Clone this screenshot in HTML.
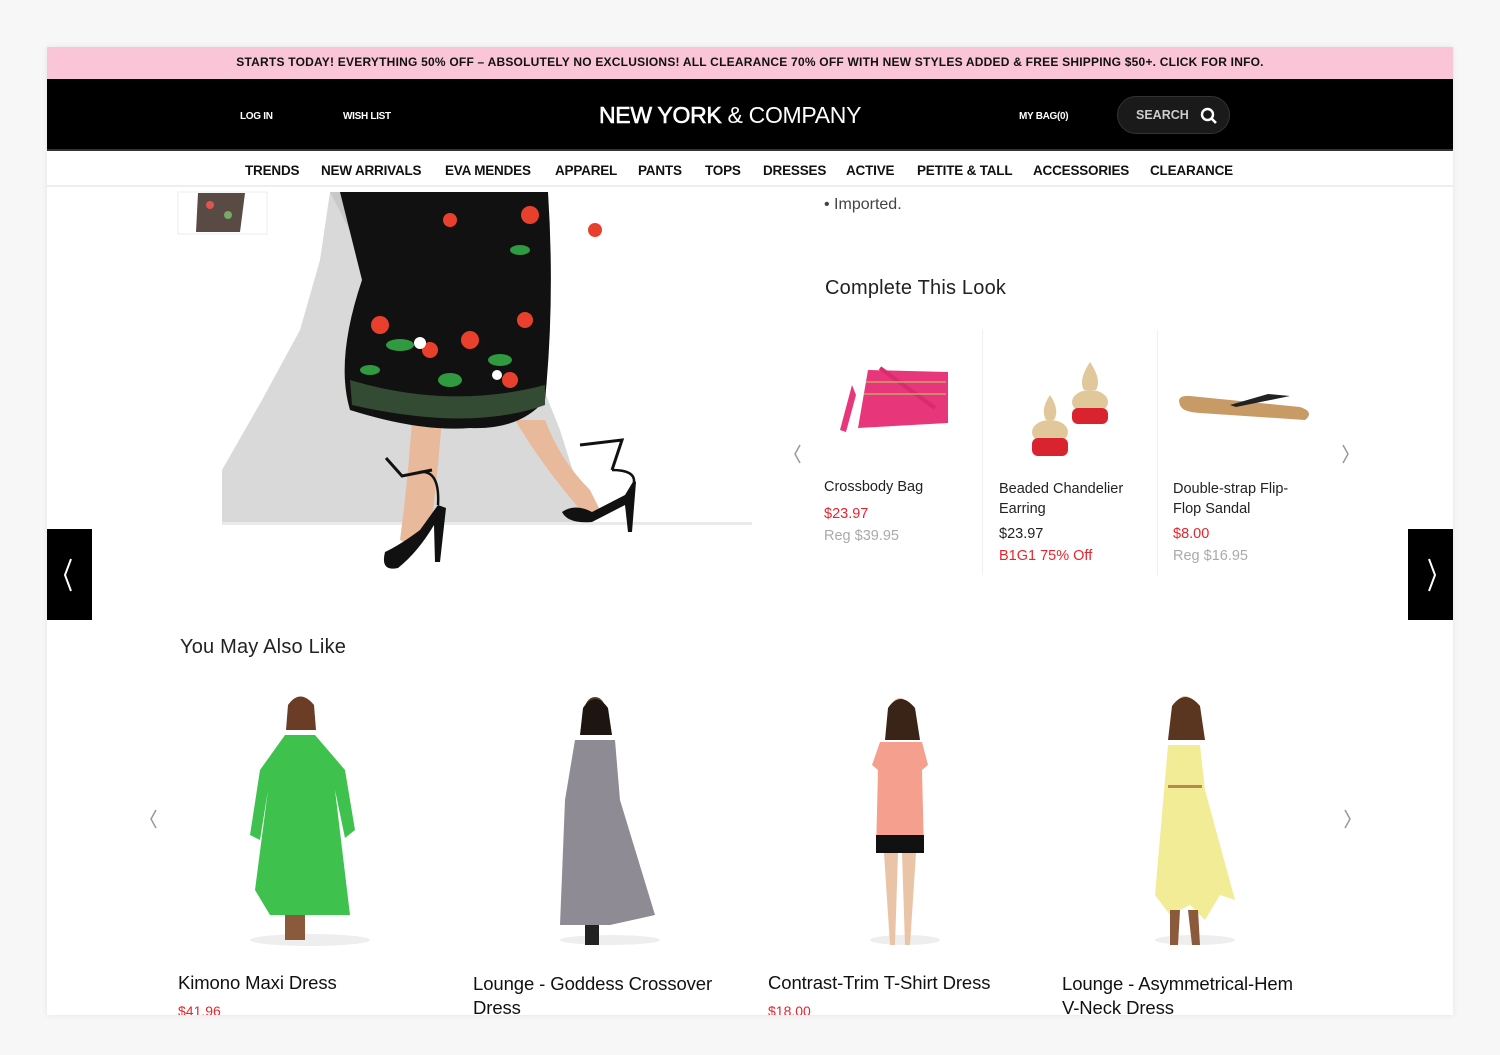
<!DOCTYPE html>
<html><head><meta charset="utf-8"><style>
*{margin:0;padding:0;box-sizing:border-box}
body{width:1500px;height:1055px;background:#f7f7f7;font-family:"Liberation Sans",Arial,sans-serif;position:relative;overflow:hidden}
.card{position:absolute;left:47px;top:47px;width:1406px;height:968px;background:#fff;overflow:hidden;box-shadow:0 0 6px rgba(0,0,0,.08)}
.a{position:absolute;white-space:nowrap}
.promo{left:0;top:0;width:1406px;height:32px;background:#fac6d7;font-size:12px;font-weight:bold;color:#111;text-align:center;line-height:31px;letter-spacing:.22px}
.hdr{left:0;top:32px;width:1406px;height:72px;background:#000;border-bottom:2px solid #333}
.nav{left:0;top:104px;width:1406px;height:36px;border-bottom:2px solid #eee;font-size:13.5px;font-weight:bold;color:#111}
.nav span{position:absolute;top:12px;letter-spacing:-.2px}
.sm{font-size:10px;font-weight:bold;color:#fff;letter-spacing:-.3px}
svg{position:absolute;left:0;top:0}
.t{font-size:14.5px;color:#222}
.r{color:#e8242d}
.g{color:#aaa}
.h{font-size:20px;color:#222;letter-spacing:.2px}
.p{font-size:18.5px;color:#111;letter-spacing:-.1px}
</style></head><body>
<div class="card">
<svg width="1406" height="968" viewBox="47 47 1406 968">
 <rect x="178" y="192" width="89" height="42" fill="#fff" stroke="#eee"/>
 <path d="M198 193 L245 193 L240 232 L196 232 Z" fill="#5a4a44"/>
 <circle cx="210" cy="205" r="4" fill="#d55"/><circle cx="228" cy="215" r="4" fill="#7a6"/>
 <path d="M222 525 L222 470 L262 400 L300 330 L320 260 L330 192 L500 192 L520 330 L560 430 L590 525 Z" fill="#d9d9d9"/>
 <path d="M330 192 L400 192 L395 250 L370 270 Z" fill="#c8c8c8"/>
 <rect x="222" y="522" width="530" height="3" fill="#eaeaea"/>
 <path d="M412 420 L442 420 Q438 470 432 520 L410 545 L400 540 Q408 480 412 420 Z" fill="#e8b99a"/>
 <path d="M515 420 L545 420 Q560 460 590 490 L600 510 L585 515 Q545 470 515 420 Z" fill="#e8b99a"/>
 <path d="M340 192 L548 192 Q555 300 545 400 Q520 430 470 428 Q420 432 350 410 Q335 360 362 280 Z" fill="#111"/>
 <path d="M350 380 Q450 410 545 385 L545 405 Q470 432 352 405 Z" fill="#334a33"/>
 <g fill="#e8402c"><circle cx="380" cy="325" r="9"/><circle cx="430" cy="350" r="8"/><circle cx="470" cy="340" r="9"/><circle cx="525" cy="320" r="8"/><circle cx="530" cy="215" r="9"/><circle cx="595" cy="230" r="7"/><circle cx="450" cy="220" r="7"/><circle cx="510" cy="380" r="8"/></g>
 <g fill="#2f9a3f"><ellipse cx="400" cy="345" rx="14" ry="6"/><ellipse cx="450" cy="380" rx="12" ry="7"/><ellipse cx="500" cy="360" rx="12" ry="6"/><ellipse cx="520" cy="250" rx="10" ry="5"/><ellipse cx="370" cy="370" rx="10" ry="5"/></g>
 <g fill="#fff"><circle cx="420" cy="343" r="6"/><circle cx="497" cy="375" r="5"/></g>
 <path d="M385 552 Q400 545 420 530 L438 505 L446 508 L440 562 L435 562 L434 525 Q418 552 398 568 Q380 572 385 552 Z" fill="#111"/>
 <path d="M386 458 L402 476 L432 470" stroke="#111" stroke-width="3" fill="none"/>
 <path d="M420 472 Q440 470 438 505" stroke="#111" stroke-width="2.5" fill="none"/>
 <path d="M562 512 Q575 503 592 512 L625 495 L634 480 L636 482 L632 532 L628 532 L625 505 L592 522 Q568 524 562 512 Z" fill="#111"/>
 <path d="M580 445 L622 440 L612 470" stroke="#111" stroke-width="3" fill="none"/>
 <path d="M612 470 Q635 470 634 482" stroke="#111" stroke-width="2.5" fill="none"/>
 <rect x="982" y="330" width="1" height="245" fill="#f0f0f0"/>
 <rect x="1157" y="330" width="1" height="245" fill="#f0f0f0"/>
 <path d="M868 370 L948 372 L948 423 L858 428 Z" fill="#e8367a"/>
 <path d="M852 385 L840 430 L846 432 L856 395 Z" fill="#e8367a"/>
 <path d="M880 368 L935 408" stroke="#d82c6e" stroke-width="4"/>
 <path d="M866 382 L946 382 M864 394 L946 394" stroke="#c9a06b" stroke-width="1.5"/>
 <g fill="#e0c89a"><path d="M1050 395 Q1040 410 1046 420 L1054 420 Q1060 410 1050 395Z"/><ellipse cx="1050" cy="432" rx="18" ry="12"/><path d="M1090 362 Q1078 380 1084 390 L1096 390 Q1102 380 1090 362Z"/><ellipse cx="1090" cy="402" rx="18" ry="12"/></g>
 <g fill="#d9232e"><rect x="1032" y="438" width="36" height="18" rx="6"/><rect x="1072" y="408" width="36" height="16" rx="6"/></g>
 <path d="M1180 405 Q1176 395 1190 396 L1300 407 Q1315 412 1305 420 L1200 413 Q1182 412 1180 405 Z" fill="#c79a66"/>
 <path d="M1230 405 L1268 394 L1290 396 L1236 407 Z" fill="#222"/>
 <path d="M800 445 L795 454 L800 463" stroke="#999" stroke-width="1.5" fill="none"/>
 <path d="M1343 445 L1348 454 L1343 463" stroke="#999" stroke-width="1.5" fill="none"/>
 <path d="M156 810 L151 819 L156 828" stroke="#999" stroke-width="1.5" fill="none"/>
 <path d="M1345 810 L1350 819 L1345 828" stroke="#999" stroke-width="1.5" fill="none"/>
 <rect x="47" y="529" width="45" height="91" fill="#000"/>
 <rect x="1408" y="529" width="45" height="91" fill="#000"/>
 <path d="M71 559 L65 575 L71 591" stroke="#fff" stroke-width="2" fill="none"/>
 <path d="M1429 559 L1435 575 L1429 591" stroke="#fff" stroke-width="2" fill="none"/>
 <g fill="#eee"><ellipse cx="310" cy="940" rx="60" ry="6"/><ellipse cx="610" cy="940" rx="50" ry="5"/><ellipse cx="905" cy="940" rx="35" ry="5"/><ellipse cx="1195" cy="940" rx="40" ry="5"/></g>
 <ellipse cx="300" cy="712" rx="11" ry="15" fill="#e5b593"/><path d="M288 705 Q300 688 314 705 L316 730 L286 730Z" fill="#6b3d26"/>
 <path d="M285 735 L315 735 L345 770 L355 830 L345 838 L335 790 L350 915 L270 915 L255 890 L268 790 L260 840 L250 835 L260 770 Z" fill="#3fc24d"/>
 <rect x="285" y="915" width="20" height="25" fill="#8b5a3c"/>
 <ellipse cx="595" cy="712" rx="11" ry="15" fill="#5a3a2a"/><path d="M583 708 Q595 690 608 708 L612 735 L580 735Z" fill="#1e1410"/>
 <path d="M575 740 L615 740 L620 800 L655 915 L610 925 L560 925 L565 800 Z" fill="#8f8b95"/>
 <rect x="585" y="925" width="14" height="20" fill="#222"/>
 <ellipse cx="900" cy="712" rx="10" ry="14" fill="#e9bfa2"/><path d="M888 708 Q900 690 915 708 L920 740 L885 740Z" fill="#3a2418"/>
 <path d="M880 742 L922 742 L928 765 L922 770 L924 852 L876 852 L878 770 L872 765 Z" fill="#f5a08f"/>
 <rect x="876" y="835" width="48" height="18" fill="#111"/>
 <path d="M884 853 L898 853 L895 945 L890 945 Z M902 853 L916 853 L910 945 L905 945 Z" fill="#eac4a6"/>
 <ellipse cx="1185" cy="710" rx="10" ry="14" fill="#e9bfa2"/><path d="M1172 706 Q1185 688 1200 706 L1205 740 L1168 740Z" fill="#5a3520"/>
 <path d="M1168 745 L1200 745 L1205 790 L1235 900 L1220 895 L1205 920 L1190 905 L1170 915 L1155 895 Z" fill="#f2ec96"/>
 <rect x="1168" y="785" width="34" height="3" fill="#b88a4a"/>
 <path d="M1170 910 L1180 910 L1178 945 L1170 945 Z M1188 910 L1198 910 L1200 945 L1192 945 Z" fill="#8b5a3c"/>
</svg>

<div class="a promo">STARTS TODAY! EVERYTHING 50% OFF – ABSOLUTELY NO EXCLUSIONS! ALL CLEARANCE 70% OFF WITH NEW STYLES ADDED &amp; FREE SHIPPING $50+. CLICK FOR INFO.</div>
<div class="a hdr">
 <span class="a sm" style="left:193px;top:32px">LOG IN</span>
 <span class="a sm" style="left:296px;top:32px">WISH LIST</span>
 <span class="a" style="left:552px;top:23px;font-size:23px;color:#fff;letter-spacing:-.3px"><b style="font-weight:normal;-webkit-text-stroke:.6px #fff">NEW YORK</b> &amp; COMPANY</span>
 <span class="a sm" style="left:972px;top:32px">MY BAG(0)</span>
 <div class="a" style="left:1070px;top:17px;width:113px;height:38px;border-radius:19px;background:#1a1a1a;border:1px solid #333">
  <span class="a" style="left:18px;top:11px;font-size:12.5px;font-weight:bold;color:#ccc">SEARCH</span>
  <svg style="left:82px;top:10px" width="18" height="18" viewBox="0 0 18 18"><circle cx="7.5" cy="7.5" r="5.5" stroke="#fff" stroke-width="2.4" fill="none"/><path d="M11.5 11.5 L16 16" stroke="#fff" stroke-width="2.6"/></svg>
 </div>
</div>
<div class="a nav">
 <span style="left:198px">TRENDS</span><span style="left:274px">NEW ARRIVALS</span><span style="left:398px">EVA MENDES</span><span style="left:508px">APPAREL</span><span style="left:591px">PANTS</span><span style="left:658px">TOPS</span><span style="left:716px">DRESSES</span><span style="left:799px">ACTIVE</span><span style="left:870px">PETITE &amp; TALL</span><span style="left:986px">ACCESSORIES</span><span style="left:1103px">CLEARANCE</span>
</div>

<div class="a" style="left:777px;top:149px;font-size:16px;color:#444">• Imported.</div>
<div class="a h" style="left:778px;top:230px">Complete This Look</div>

<div class="a t" style="left:777px;top:432px">Crossbody Bag</div>
<div class="a t r" style="left:777px;top:459px">$23.97</div>
<div class="a t g" style="left:777px;top:481px">Reg $39.95</div>

<div class="a t" style="left:952px;top:432px;line-height:20px">Beaded Chandelier<br>Earring</div>
<div class="a t" style="left:952px;top:479px">$23.97</div>
<div class="a t r" style="left:952px;top:501px">B1G1 75% Off</div>

<div class="a t" style="left:1126px;top:432px;line-height:20px">Double-strap Flip-<br>Flop Sandal</div>
<div class="a t r" style="left:1126px;top:479px">$8.00</div>
<div class="a t g" style="left:1126px;top:501px">Reg $16.95</div>

<div class="a h" style="left:133px;top:589px">You May Also Like</div>

<div class="a p" style="left:131px;top:925px">Kimono Maxi Dress</div>
<div class="a r" style="left:131px;top:956px;font-size:14px">$41.96</div>
<div class="a p" style="left:426px;top:925px;line-height:24px">Lounge - Goddess Crossover<br>Dress</div>
<div class="a p" style="left:721px;top:925px">Contrast-Trim T-Shirt Dress</div>
<div class="a r" style="left:721px;top:956px;font-size:14px">$18.00</div>
<div class="a p" style="left:1015px;top:925px;line-height:24px">Lounge - Asymmetrical-Hem<br>V-Neck Dress</div>
</div>
</body></html>
